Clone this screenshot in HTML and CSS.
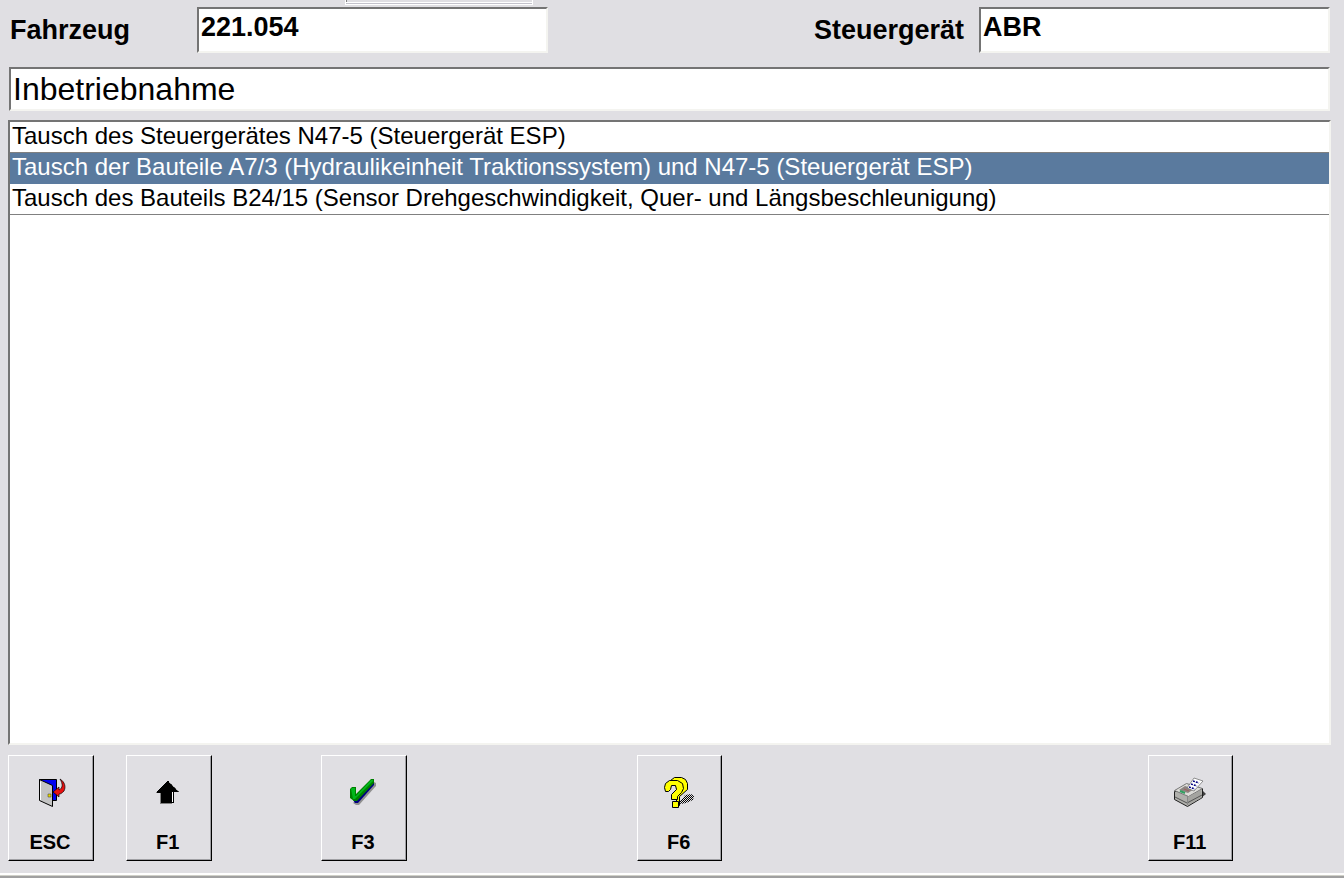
FILE: index.html
```html
<!DOCTYPE html>
<html lang="de">
    <head>
        <meta charset="utf-8">
        <meta name="viewport" content="width=device-width, initial-scale=1">
        <title>Inbetriebnahme</title>
        <link rel="stylesheet" href="styles.css">
    </head>
    <body>
        <div class="top-strip"><div class="tab"></div></div>
        <main>
            <div class="vehicle-row">
                <label for="vehicle" class="vehicle-label">Fahrzeug</label>
                <input type="text" id="vehicle" class="sunken field" value="221.054" readonly>
                <label for="controlUnit" class="unit-label">Steuergerät</label>
                <input type="text" id="controlUnit" class="sunken field" value="ABR" readonly>
            </div>
            <h1 class="sunken">Inbetriebnahme</h1>
            <ul class="sunken list">
                <li><button type="button">Tausch des Steuergerätes N47-5 (Steuergerät ESP)</button></li>
                <li><button type="button" class="selected">Tausch der Bauteile A7/3 (Hydraulikeinheit Traktionssystem) und N47-5 (Steuergerät ESP)</button></li>
                <li><button type="button">Tausch des Bauteils B24/15 (Sensor Drehgeschwindigkeit, Quer- und Längsbeschleunigung)</button></li>
            </ul>
            <div class="keys">
                <button type="button" class="key esc">
                    <svg viewBox="0 0 34 34" aria-hidden="true">
                        <path fill="#0000f0" stroke="#000" d="M6.500 4.500h17v21h-8z"/>
                        <path fill="#c4c4c4" stroke="#000" d="M6.500 4.500l13 6v21l-13-6z"/>
                        <path fill="none" stroke="#fff" d="M7.500 25V6.500"/>
                        <path fill="#e8d800" stroke="#333" stroke-width=".5" d="M15 19h3v3h-3z"/>
                        <path fill="#e81010" stroke="#000" stroke-width=".7" d="M27 4c5 3 6 8 4 12-2 2-3 3-5 3v3l-6-5 6-5v3c4-2 4-6 1-11z"/>
                    </svg>
                    <span>ESC</span>
                </button>
                <div class="key-groups">
                    <div class="key-group">
                        <button type="button" class="key f1">
                            <svg viewBox="0 0 34 34" aria-hidden="true">
                                <path fill="#808080" d="M5 17h6v11h10v1H9V18H5z"/>
                                <path d="M16 6h2v1h1v1h1v1h1v1h1v1h1v1h1v1h1v1h1v1h1v1h1v1h-5v11H10V18H6v-2h1v-1h1v-1h1v-1h1v-1h1v-1h1v-1h1V9h1V8h1V7h1z"/>
                                <path stroke="#fff" d="M21.500 17v10"/>
                                <path fill="none" stroke="#fff" stroke-dasharray="1 1" d="M18 7l10 10"/>
                            </svg>
                            <span>F1</span>
                        </button>
                        <button type="button" class="key f3">
                            <svg viewBox="0 0 34 34" aria-hidden="true">
                                <path fill="#909090" d="M28 7l2 1v3L13 30h-3l-3-2z"/>
                                <path fill="#000080" d="M26 5l2 2v3L12 28H9l-2-3z"/>
                                <path fill="#008000" d="M4 14l2-2h4v7L25 4h3v4L11 26H8l-4-3z"/>
                                <path fill="#00b81c" d="M5 14l1-1h3v8h1L25 5h2v1L9 24H7z"/>
                            </svg>
                            <span>F3</span>
                        </button>
                    </div>
                    <div class="key-group">
                        <button type="button" class="key f6">
                            <svg viewBox="0 0 34 34" aria-hidden="true">
                                <defs>
                                    <pattern id="dither" width="2" height="2" patternUnits="userSpaceOnUse">
                                        <path d="M0 0h1v1H0zM1 1h1v1H1z"/>
                                    </pattern>
                                </defs>
                                <path fill="url(#dither)" d="M16 28l5-5 2-3 6-1 3 2-1 4-7 3-5 1z"/>
                                <path fill="#ffff00" stroke="#000" d="M8.500 5.500l4-3h7l4 2 2 4v6l-8 7v9l-3 2V12z"/>
                                <path fill="#ffff00" stroke="#000" d="M2.500 12.500l1-4 4-3h8l5 3 1 5-2 4-4 4v3h-6v-5l5-5-1-4h-4l-1 4-2 2h-3z"/>
                                <path fill="#ffff00" stroke="#000" d="M10.500 26.500h6v6h-6z"/>
                            </svg>
                            <span>F6</span>
                        </button>
                    </div>
                    <div class="key-group">
                        <button type="button" class="key f11">
                            <svg viewBox="0 0 34 34" aria-hidden="true">
                                <path fill="#404040" d="M29 15l4 4-5 4z"/>
                                <path fill="#b0b0ac" stroke="#202020" d="M1.500 16.500v8l13 7 15-9v-9z"/>
                                <path fill="#dcdcd8" stroke="#777" d="M1.500 15.500l12-7 16 5-14 8z"/>
                                <path fill="#a4a4a0" d="M15 22l13-7v8l-13 7z"/>
                                <path stroke="#555" fill="none" d="M2 22l12 6 15-8"/>
                                <path stroke="#888" fill="none" d="M14.500 21v9"/>
                                <path fill="#8c8480" d="M6 15l6-4 9 3-6 4z"/>
                                <path stroke="#30a060" stroke-width="2" d="M7 16l5 2"/>
                                <path stroke="#a06060" d="M11 14l5 2"/>
                                <path fill="#fff" stroke="#666" stroke-width=".7" d="M14 13l7-10 9 3-9 10z"/>
                                <path stroke="#000080" stroke-width="1.500" stroke-dasharray="2 1" d="M20 6l6 2M18 9l6 2M16 12l6 2"/>
                            </svg>
                            <span>F11</span>
                        </button>
                    </div>
                </div>
            </div>
        </main>
        <footer></footer>
    </body>
</html>
```

FILE: styles.css
```css
* {
    box-sizing: border-box;
}
body, html {
    padding: 0;
    margin: 0;
}
body {
    display: flex;
    flex-direction: column;
    min-height: 100vh;
    background-color: #e0dfe3;
    color: #000;
    font-family: "Liberation Sans", Arial, sans-serif;
}
button, input {
    font-family: inherit;
    color: inherit;
}
.top-strip {
    height: 7px;
    padding-left: 345px;
}
.tab {
    width: 188px;
    height: 5px;
    border: 1px solid #fff;
    border-top: 0;
    box-shadow: inset 0 -1px #c4c3cc, inset 0 -2px #fff, inset 1px 0 #808080;
    background-color: #e0dfe3;
}
main {
    flex: 1;
    display: flex;
    flex-direction: column;
    padding: 0 13px 12px 8px;
}
.sunken {
    background-color: #fff;
    border: 2px solid;
    border-color: #747474 #f4f4f0 #f4f4f0 #747474;
}
.vehicle-row {
    display: flex;
    align-items: center;
    margin: 0 1px 14px 0;
}
.vehicle-row label {
    font-size: 27px;
    font-weight: bold;
}
.vehicle-label {
    width: 189px;
    padding-left: 2px;
}
.unit-label {
    margin-left: auto;
    padding-right: 15px;
}
.field {
    width: 351px;
    height: 46px;
    padding: 0 2px 6px;
    font-size: 27px;
    font-weight: bold;
}
.field:focus {
    outline: none;
}
h1 {
    margin: 0 1px 9px;
    padding: 0 2px;
    font-size: 32px;
    font-weight: normal;
    line-height: 40px;
}
.list {
    flex: 1;
    margin: 0 0 10px;
    padding: 0;
    list-style: none;
}
.list button {
    display: block;
    width: 100%;
    height: 31px;
    padding: 0 2px 2px;
    border: 0;
    border-bottom: 1px solid #808080;
    background-color: #fff;
    font-size: 24px;
    line-height: 28px;
    text-align: left;
    white-space: nowrap;
}
.list .selected {
    border-color: #5a7a9e;
    background-color: #5a7a9e;
    color: #fff;
}
.keys {
    display: flex;
    gap: 32px;
}
.key-groups {
    flex: 1;
    display: grid;
    grid-template-columns: repeat(3, 1fr);
    gap: 35px;
}
.key-group {
    display: grid;
    grid-template-columns: repeat(4, 1fr);
    gap: 12px;
}
.key {
    display: flex;
    flex-direction: column;
    align-items: center;
    justify-content: space-between;
    height: 106px;
    padding: 19px 2px 6px 0;
    border: 1px solid;
    border-color: #fff #000 #000 #fff;
    box-shadow: inset -1px -1px #a0a0a4;
    background-color: #e0dfe3;
    font-size: 20px;
    font-weight: bold;
    line-height: 24px;
}
.key svg {
    width: 34px;
    height: 34px;
}
.esc {
    width: 86px;
}
.f1 {
    grid-column: 1;
}
.f3, .f11 {
    grid-column: 3;
}
.f6 {
    grid-column: 2;
}
footer {
    height: 5px;
    border-top: 2px solid #fff;
    border-bottom: 2px solid #a0a0a0;
    background-color: #d0d0c8;
}
```
